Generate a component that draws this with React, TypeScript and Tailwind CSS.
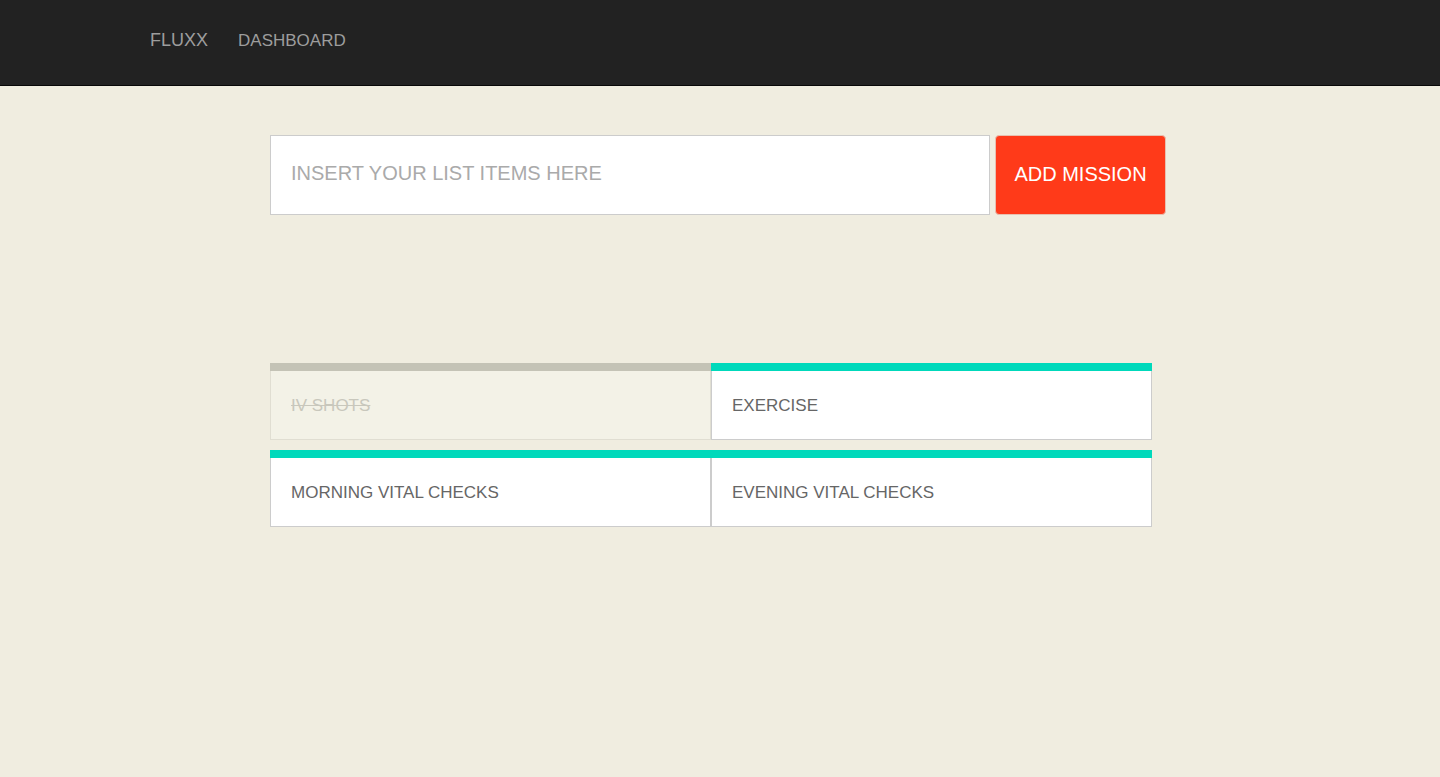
const missions = [
  { id: 1, title: 'IV SHOTS', done: true },
  { id: 2, title: 'EXERCISE', done: false },
  { id: 3, title: 'MORNING VITAL CHECKS', done: false },
  { id: 4, title: 'EVENING VITAL CHECKS', done: false },
]

function MissionCard({ title, done }: { title: string; done: boolean }) {
  return (
    <div className="flex flex-col">
      <div className={done ? 'h-[8px] bg-[#c4c3b6]' : 'h-[8px] bg-[#00d9bb]'} />
      <div
        className={
          done
            ? 'flex h-[69px] items-center border border-t-0 border-[#e0ded2] bg-[#f3f2e7] px-[20px] pt-[2px]'
            : 'flex h-[69px] items-center border border-t-0 border-[#cccccc] bg-white px-[20px] pt-[2px]'
        }
      >
        <span
          className={
            done
              ? 'text-[17px] text-[#c8c7bc] line-through'
              : 'text-[17px] text-[#666666]'
          }
        >
          {title}
        </span>
      </div>
    </div>
  )
}

export default function App() {
  return (
    <div className="min-h-[777px] bg-[#f0ede0] font-['Liberation_Sans',Arial,sans-serif]">
      <nav className="flex h-[86px] items-start border-b border-[#080808] bg-[#222222] pl-[150px] pt-[27px]">
        <span className="text-[18px] text-[#9d9d9d]">FLUXX</span>
        <span className="ml-[30px] text-[17px] leading-[27px] text-[#9d9d9d]">DASHBOARD</span>
      </nav>

      <main className="ml-[270px] w-[896px] pt-[49px]">
        <div className="flex gap-[5px]">
          <input
            className="h-[80px] w-[720px] border border-[#cccccc] bg-white px-[20px] pb-[3px] text-[20px] text-[#555] outline-none placeholder:text-[#aaaaaa]"
            placeholder="INSERT YOUR LIST ITEMS HERE"
          />
          <button className="h-[80px] w-[171px] rounded-[4px] border border-[#e8c0b0] bg-[#ff3a19] pb-[2px] text-[20px] text-white">
            ADD MISSION
          </button>
        </div>

        <div className="mt-[148px] grid w-[882px] grid-cols-2 gap-y-[10px]">
          {missions.map((m) => (
            <MissionCard key={m.id} title={m.title} done={m.done} />
          ))}
        </div>
      </main>
    </div>
  )
}
